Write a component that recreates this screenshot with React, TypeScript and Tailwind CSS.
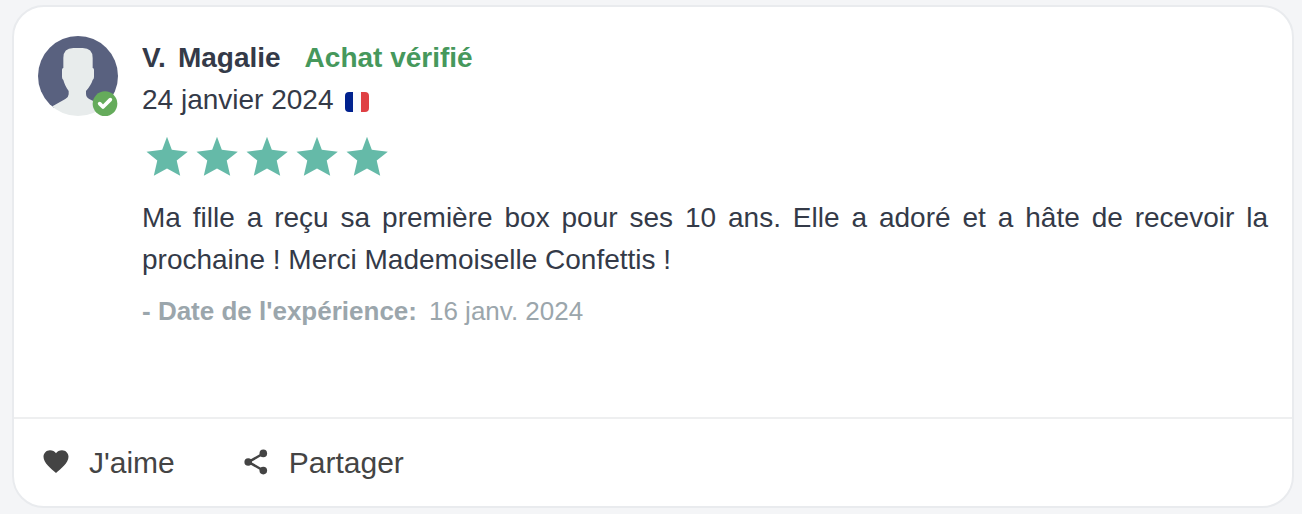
const STARS = [1, 2, 3, 4, 5];

const Avatar = () => (
  <svg viewBox="0 0 240 240" className="size-20 shrink-0" role="img" aria-label="V. Magalie">
    <clipPath id="avatar-clip">
      <circle cx="120" cy="120" r="120" />
    </clipPath>
    <g clipPath="url(#avatar-clip)">
      <rect width="240" height="216" fill="#59617f" />
      <path
        fill="#e8ecec"
        d="M76 96 V66 Q76 36 106 36 H134 Q164 36 164 66 V96 Q168 96 168 101 V123 Q168 129 164 132 C160 144 154 154 144 165 V174 C144 183 150 187 158 191 L204 214 V250 H34 V216 L82 189 Q92 183 92 175 V165 C84 154 79 143 76 132 Q72 129 72 123 V101 Q72 96 76 96 Z"
      />
    </g>
    <circle cx="201" cy="203" r="37" fill="#65ab5b" />
    <path
      d="M185 203 L195 213 L217 191"
      fill="none"
      stroke="#fff"
      strokeWidth="11"
      strokeLinecap="round"
      strokeLinejoin="round"
    />
  </svg>
);

const Star = () => (
  <svg viewBox="0 0 50 50" className="size-[50px]" fill="#65baa8" aria-hidden="true">
    <path d="M25 4.7 L29.8 17.8 L45.8 19.7 L34.7 28.5 L38.2 43.8 L25 36.5 L11.8 43.8 L15.3 28.5 L4.5 19.7 L20.2 17.8 Z" />
  </svg>
);

const Flag = () => (
  <svg viewBox="0 0 24 20" className="mt-1 h-5 w-6" role="img" aria-label="France">
    <clipPath id="flag-clip">
      <rect width="24" height="20" rx="4" />
    </clipPath>
    <g clipPath="url(#flag-clip)">
      <rect width="8" height="20" fill="#00218e" />
      <rect x="8" width="8" height="20" fill="#fafafc" />
      <rect x="16" width="8" height="20" fill="#df4044" />
    </g>
  </svg>
);

const Heart = () => (
  <svg viewBox="0 1 26 26" className="size-[26px]" fill="#444" aria-hidden="true">
    <path d="M13 24 C8 19.5 0.5 14 0.5 7.8 C0.5 4.1 3.3 1.2 7 1.2 C9.5 1.2 11.8 2.2 13 4.2 C14.2 2.2 16.5 1.2 19 1.2 C22.7 1.2 25.5 4.1 25.5 7.8 C25.5 14 18 19.5 13 24 Z" />
  </svg>
);

const Share = () => (
  <svg viewBox="-1 0 26 28" className="h-7 w-[26px]" fill="#444" aria-hidden="true">
    <path d="M19.3 4.5 L4.5 13 L19.3 21.5" fill="none" stroke="#444" strokeWidth="2.5" />
    <circle cx="19.3" cy="4.4" r="3.8" />
    <circle cx="4.2" cy="13" r="3.8" />
    <circle cx="19.3" cy="21.6" r="3.8" />
  </svg>
);

export default function App() {
  return (
    <main className="min-h-screen bg-[#f4f5f7] pt-[5px] pr-2 pb-[6px] pl-3 font-['Liberation_Sans',Arial,sans-serif] text-[28px] leading-[42px] text-[#343a48]">
      <article className="rounded-[32px] border-2 border-[#e9ebee] bg-white">
        <div className="flex gap-6 px-6 pt-[29px] pb-[87px]">
          <Avatar />
          <div className="min-w-0 flex-1 pt-px">
            <header className="flex gap-6 font-bold">
              <h2 className="flex gap-3">
                <span>V.</span>
                <span>Magalie</span>
              </h2>
              <span className="text-[#46985c]">Achat vérifié</span>
            </header>
            <p className="flex items-center gap-3">
              <time dateTime="2024-01-24">24 janvier 2024</time>
              <Flag />
            </p>
            <div className="mt-[11px] mb-[15px] flex" role="img" aria-label="5 étoiles sur 5">
              {STARS.map((n) => (
                <Star key={n} />
              ))}
            </div>
            <p className="text-justify">
              Ma fille a reçu sa première box pour ses 10 ans. Elle a adoré et a hâte de recevoir la prochaine ! Merci
              Mademoiselle Confettis !
            </p>
            <p className="mt-[11px] flex gap-3 text-[26px] leading-[38px] text-[#9ba6ac]">
              <strong>- Date de l'expérience:</strong>
              <time dateTime="2024-01-16">16 janv. 2024</time>
            </p>
          </div>
        </div>
        <footer className="flex gap-[68px] border-t-2 border-[#eeeff0] px-[29px] pt-[23px] pb-[22px] text-[30px] text-[#444]">
          <button type="button" className="flex items-center gap-5">
            <Heart />
            J'aime
          </button>
          <button type="button" className="flex items-center gap-5">
            <Share />
            Partager
          </button>
        </footer>
      </article>
    </main>
  );
}
